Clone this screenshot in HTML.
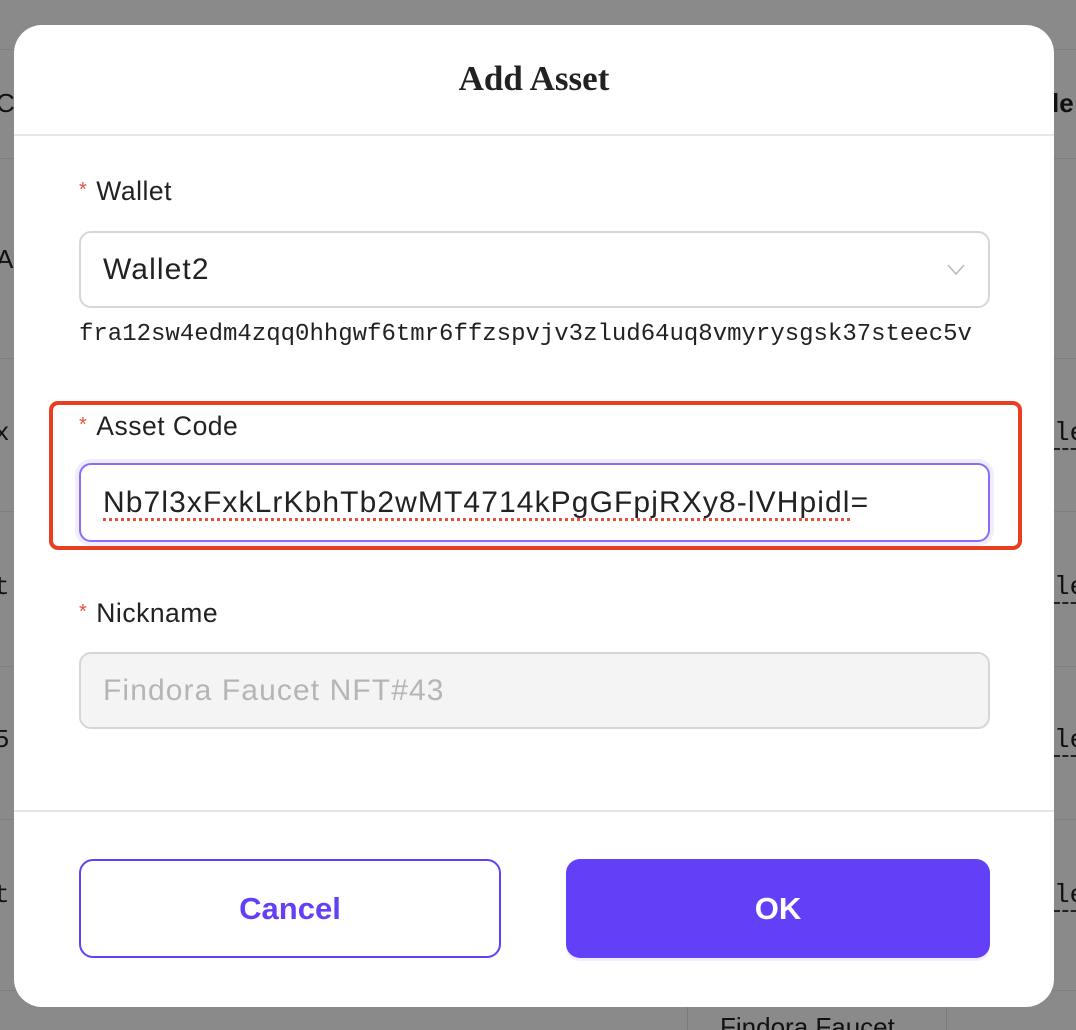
<!DOCTYPE html>
<html><head><meta charset="utf-8"><style>
*{box-sizing:border-box;margin:0;padding:0}
html,body{width:1076px;height:1030px;overflow:hidden;background:#8a8a8a;font-family:"Liberation Sans",sans-serif;position:relative}
.hl{position:absolute;left:0;right:0;height:1px;background:#7f7f7f}
.bg{position:absolute;font-size:26px;color:#111}
.mono{font-family:"Liberation Mono",monospace}
.modal{position:absolute;left:14px;top:25px;width:1040px;height:982px;background:#fff;border-radius:28px;overflow:hidden}
.title{position:absolute;left:0;right:0;top:34px;text-align:center;font-family:"Liberation Serif",serif;font-weight:bold;font-size:35px;color:#222}
.div{position:absolute;left:0;right:0;height:2px;background:#e6e6e6}
.lbl{position:absolute;left:65px;font-size:26.5px;letter-spacing:0.5px;color:#222}
.lbl b{color:#e8503a;font-weight:normal;font-size:20px;position:relative;top:-4px;margin-right:9px}
.inp{position:absolute;left:65px;width:911px;border:2px solid #d6d6d6;border-radius:12px;font-size:30px;letter-spacing:1.1px;color:#222;padding-left:22px;display:flex;align-items:center}
</style></head><body>
<div class="hl" style="top:49px"></div><div class="hl" style="top:158px"></div><div class="hl" style="top:358px"></div><div class="hl" style="top:511px"></div><div class="hl" style="top:666px"></div><div class="hl" style="top:819px"></div><div class="hl" style="top:990px"></div>
<div class="bg" style="left:-4px;top:88px">C</div>
<div class="bg" style="left:-4px;top:244px">A</div>
<div class="bg mono" style="left:-6px;top:418px">x</div>
<div class="bg mono" style="left:-6px;top:572px">t</div>
<div class="bg mono" style="left:-6px;top:725px">5</div>
<div class="bg mono" style="left:-6px;top:880px">t</div>
<div class="bg" style="left:1052px;top:88px;font-weight:bold">le</div>
<div class="bg mono" style="left:1054px;top:418px;border-bottom:2px dashed #222">le</div>
<div class="bg mono" style="left:1054px;top:572px;border-bottom:2px dashed #222">le</div>
<div class="bg mono" style="left:1054px;top:725px;border-bottom:2px dashed #222">le</div>
<div class="bg mono" style="left:1054px;top:880px;border-bottom:2px dashed #222">le</div>
<div style="position:absolute;left:687px;top:990px;width:1px;height:40px;background:#7a7a7a"></div>
<div style="position:absolute;left:946px;top:990px;width:1px;height:40px;background:#7a7a7a"></div>
<div class="bg" style="left:720px;top:1012px">Findora Faucet</div>

<div class="modal">
<div class="title">Add Asset</div>
<div class="div" style="top:109px"></div>
<div class="lbl" style="top:151px"><b>*</b>Wallet</div>
<div class="inp" style="top:206px;height:77px">Wallet2
<svg style="position:absolute;right:22px;top:30px" width="20" height="14" viewBox="0 0 20 14"><path d="M2 2 L10 11 L18 2" fill="none" stroke="#bbb" stroke-width="1.6"/></svg></div>
<div class="mono" style="position:absolute;left:65px;top:296px;font-size:24px;color:#222">fra12sw4edm4zqq0hhgwf6tmr6ffzspvjv3zlud64uq8vmyrysgsk37steec5v</div>
<div style="position:absolute;left:35px;top:376px;width:973px;height:149px;border:4px solid #e83e22;border-radius:9px"></div>
<div class="lbl" style="top:386px"><b>*</b>Asset Code</div>
<div class="inp" style="top:438px;height:79px;border-color:#8a6cf7;box-shadow:0 0 0 4px #f1edfe"><span style="text-decoration:underline dotted #e8503a;text-decoration-skip-ink:none;text-underline-offset:6px;text-decoration-thickness:3px">Nb7l3xFxkLrKbhTb2wMT4714kPgGFpjRXy8-lVHpidl</span>=</div>
<div class="lbl" style="top:573px"><b>*</b>Nickname</div>
<div class="inp" style="top:627px;height:77px;background:#f4f4f4;color:#b5b5b5">Findora Faucet NFT#43</div>
<div class="div" style="top:785px"></div>
<div style="position:absolute;left:65px;top:834px;width:422px;height:99px;border:2px solid #6340f8;border-radius:14px;color:#6340f8;font-weight:bold;font-size:31px;display:flex;align-items:center;justify-content:center">Cancel</div>
<div style="position:absolute;left:552px;top:834px;width:424px;height:99px;background:#6340f8;border-radius:14px;color:#fff;font-weight:bold;font-size:31px;display:flex;align-items:center;justify-content:center;box-shadow:0 3px 0 #f1edfe">OK</div>
</div>
</body></html>
